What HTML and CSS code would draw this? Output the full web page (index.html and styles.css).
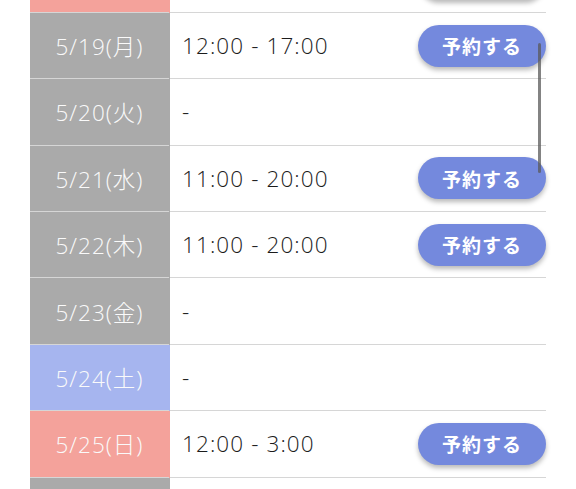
FILE: index.html
```html
<!DOCTYPE html>
<html lang="ja">
<head>
<meta charset="utf-8">
<link rel="stylesheet" href="styles.css">
</head>
<body>
<div class="viewport">
  <table class="schedule">
    <tbody>
      <tr class="row">
        <th class="date sun">5/18(日)</th>
        <td class="time">12:00 - 17:00</td>
        <td class="action"><button class="reserve">予約する</button></td>
      </tr>
      <tr class="row">
        <th class="date">5/19(月)</th>
        <td class="time">12:00 - 17:00</td>
        <td class="action"><button class="reserve">予約する</button></td>
      </tr>
      <tr class="row">
        <th class="date">5/20(火)</th>
        <td class="time">-</td>
        <td class="action"></td>
      </tr>
      <tr class="row">
        <th class="date">5/21(水)</th>
        <td class="time">11:00 - 20:00</td>
        <td class="action"><button class="reserve">予約する</button></td>
      </tr>
      <tr class="row">
        <th class="date">5/22(木)</th>
        <td class="time">11:00 - 20:00</td>
        <td class="action"><button class="reserve">予約する</button></td>
      </tr>
      <tr class="row">
        <th class="date">5/23(金)</th>
        <td class="time">-</td>
        <td class="action"></td>
      </tr>
      <tr class="row">
        <th class="date sat">5/24(土)</th>
        <td class="time">-</td>
        <td class="action"></td>
      </tr>
      <tr class="row">
        <th class="date sun">5/25(日)</th>
        <td class="time">12:00 - 3:00</td>
        <td class="action"><button class="reserve">予約する</button></td>
      </tr>
      <tr class="row">
        <th class="date">5/26(月)</th>
        <td class="time">-</td>
        <td class="action"></td>
      </tr>
    </tbody>
  </table>
  <div class="scrollbar"></div>
</div>
</body>
</html>
```

FILE: styles.css
```css
html, body {
  margin: 0;
  padding: 0;
  background: #ffffff;
}

.viewport {
  position: relative;
  width: 576px;
  height: 489px;
  overflow: hidden;
  padding: 0 30px;
  box-sizing: border-box;
}

.schedule {
  width: 100%;
  border-collapse: collapse;
  margin-top: -54px;
  font-family: "Open Sans", "Noto Sans CJK JP", sans-serif;
}

.row {
  height: 66.4px;
  border-bottom: 1px solid #d6d6d6;
}

.date {
  width: 139px;
  padding: 0;
  background: #aaaaaa;
  color: #fafafa;
  font-weight: 300;
  font-size: 22.5px;
  letter-spacing: 1px;
  text-align: center;
  border-right: 1px solid #aaaaaa;
}

.date.sun {
  background: #f4a29b;
  border-right-color: #f4a29b;
}

.date.sat {
  background: #a6b5ef;
  border-right-color: #a6b5ef;
}

.time {
  padding: 0 0 0 12px;
  font-size: 22.5px;
  letter-spacing: 1.1px;
  color: #1c1c1c;
  font-weight: 300;
}

.action {
  width: 128px;
  padding: 0;
  text-align: right;
}

.reserve {
  display: inline-block;
  width: 128px;
  height: 42px;
  border: none;
  border-radius: 21px;
  background: #7489dd;
  color: #ffffff;
  font-family: "Noto Sans CJK JP", sans-serif;
  font-weight: 700;
  font-size: 19px;
  letter-spacing: 1px;
  box-shadow: 0 3px 5px rgba(0, 0, 0, 0.28);
  vertical-align: middle;
}

.scrollbar {
  position: absolute;
  left: 538px;
  top: 43px;
  width: 3px;
  height: 130px;
  border-radius: 2px;
  background: rgba(90, 90, 90, 0.75);
}
```
